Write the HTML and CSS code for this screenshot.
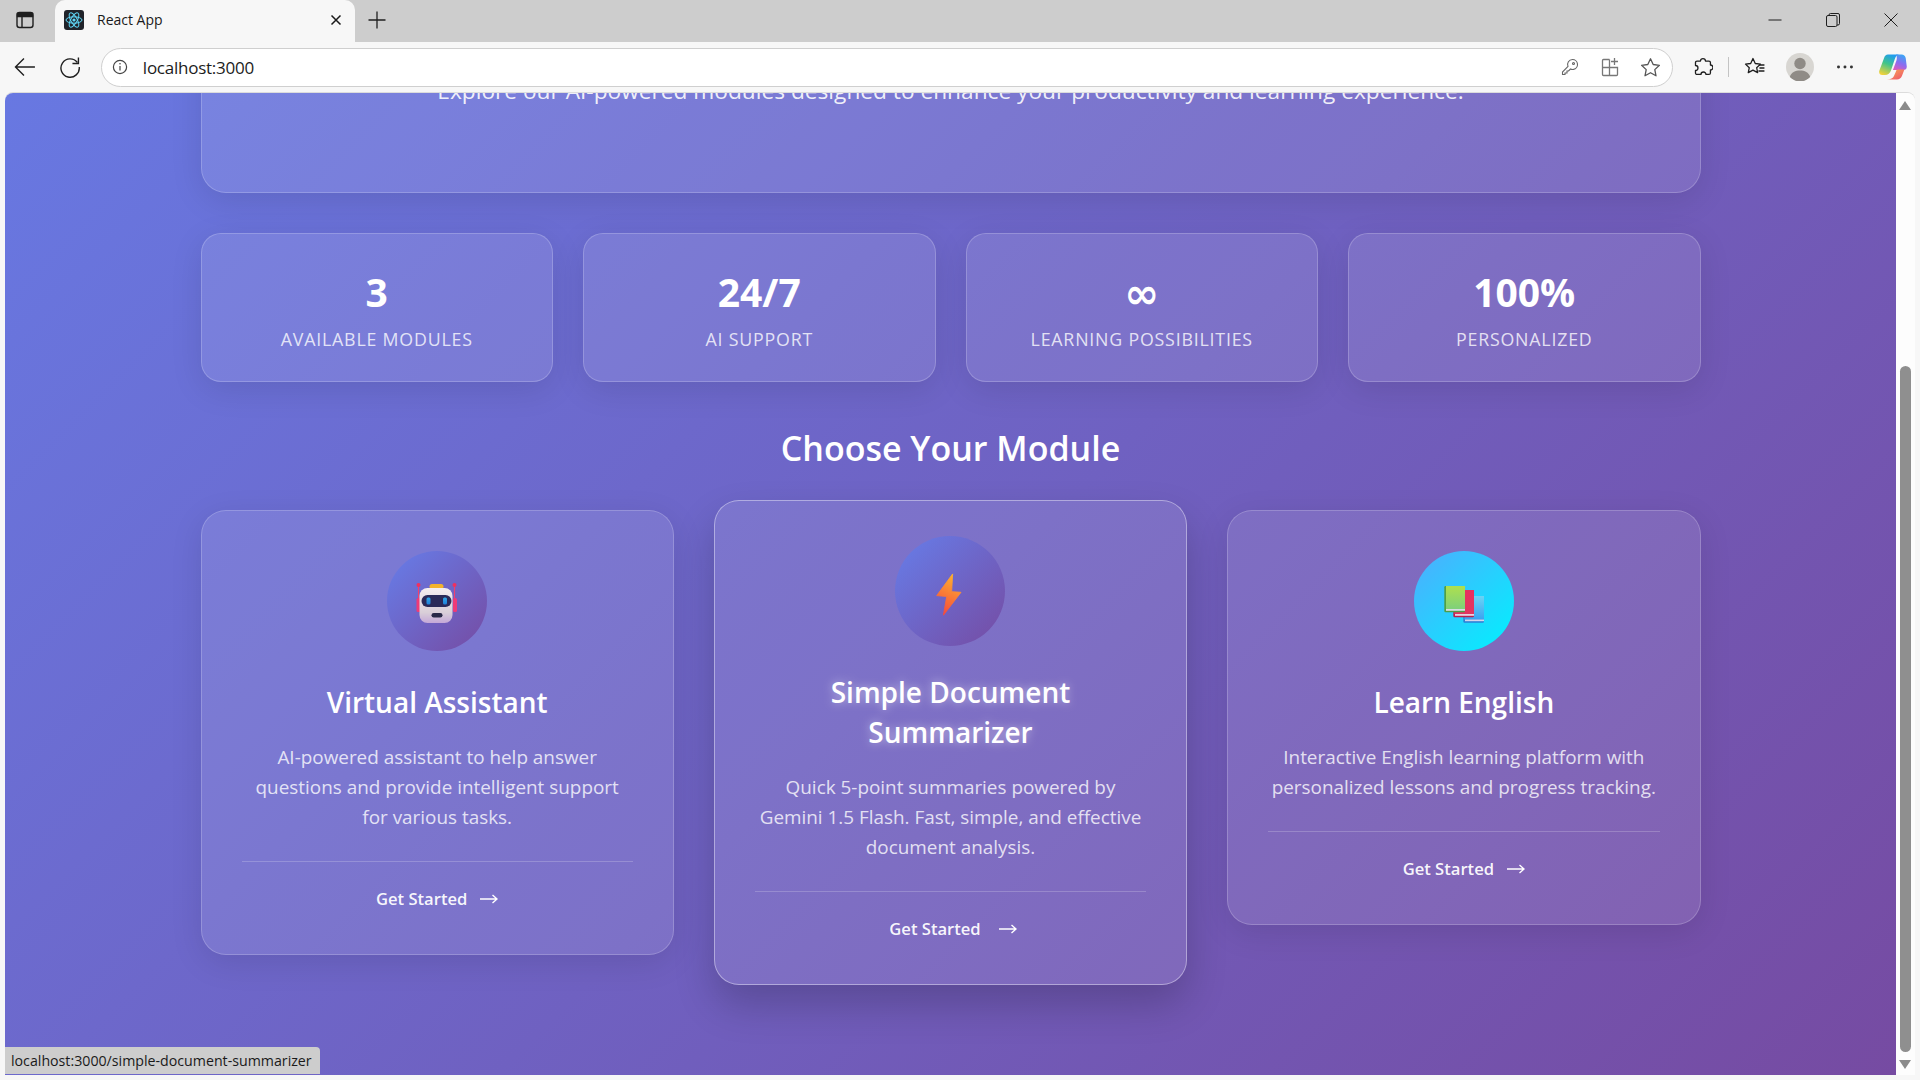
FILE: index.html
```html
<!DOCTYPE html>
<html lang="en">
<head>
<meta charset="utf-8">
<title>React App</title>
<link rel="stylesheet" href="styles.css">
</head>
<body>
<div class="window">
  <header class="tabstrip">
    <button class="chrome-btn sidebar-btn" aria-label="Tabs">
      <svg width="20" height="20" viewBox="0 0 20 20" fill="none" stroke="#1f1f1f" stroke-width="1.4"><rect x="2" y="2.5" width="16" height="15" rx="2.5"/><path d="M2.5 3.5h15v3h-15z" fill="#1f1f1f"/><path d="M7 6v11"/></svg>
    </button>
    <div class="tab">
      <svg class="favicon" width="20" height="20" viewBox="0 0 20 20"><rect width="20" height="20" rx="3" fill="#20232a"/><g fill="none" stroke="#61dafb" stroke-width="1"><ellipse cx="10" cy="10" rx="8" ry="3.2"/><ellipse cx="10" cy="10" rx="8" ry="3.2" transform="rotate(60 10 10)"/><ellipse cx="10" cy="10" rx="8" ry="3.2" transform="rotate(120 10 10)"/></g><circle cx="10" cy="10" r="1.6" fill="#61dafb"/></svg>
      <span class="tab-title">React App</span>
      <svg class="tab-close" width="12" height="12" viewBox="0 0 12 12" stroke="#1a1a1a" stroke-width="1.5"><path d="M1.5 1.5l9 9M10.5 1.5l-9 9"/></svg>
    </div>
    <svg class="new-tab" width="18" height="18" viewBox="0 0 18 18" stroke="#1f1f1f" stroke-width="1.3"><path d="M9 0.5v17M0.5 9h17"/></svg>
    <div class="window-controls">
      <svg width="14" height="14" viewBox="0 0 14 14" stroke="#1f1f1f" stroke-width="1"><path d="M0.5 7h13"/></svg>
      <svg width="14" height="14" viewBox="0 0 14 14" fill="none" stroke="#1f1f1f" stroke-width="1"><rect x="0.5" y="2.5" width="10.5" height="11" rx="1.5"/><path d="M3 2.5V2a1.5 1.5 0 0 1 1.5-1.5H12A1.5 1.5 0 0 1 13.5 2v8.5a1.5 1.5 0 0 1-1.5 1.5h-1"/></svg>
      <svg width="14" height="14" viewBox="0 0 14 14" stroke="#1f1f1f" stroke-width="1"><path d="M0.5 0.5l13 13M13.5 0.5l-13 13"/></svg>
    </div>
  </header>

  <nav class="toolbar">
    <svg class="tool-back" width="22" height="22" viewBox="0 0 22 22" fill="none" stroke="#1f1f1f" stroke-width="1.4"><path d="M21 11H1.5M10 2.5L1.5 11l8.5 8.5"/></svg>
    <svg class="tool-reload" width="22" height="22" viewBox="0 0 22 22" fill="none" stroke="#1f1f1f" stroke-width="1.4"><path d="M18.5 6.5A9.2 9.2 0 1 0 20.3 11"/><path d="M19.5 1.5v6h-6"/></svg>
    <div class="address">
      <svg width="16" height="16" viewBox="0 0 16 16" fill="none" stroke="#444" stroke-width="1.2"><circle cx="8" cy="8" r="6.6"/><path d="M8 7v4.5"/><circle cx="8" cy="4.8" r=".8" fill="#444" stroke="none"/></svg>
      <span class="url">localhost:3000</span>
      <div class="address-icons">
        <svg width="20" height="20" viewBox="0 0 20 20" fill="none" stroke="#666" stroke-width="1.1"><path d="M12.5 2.5a5 5 0 0 1 1 9.9 5 5 0 0 1-3-.4L8.5 14H7v2H5v1.5H2.5v-2.5L8 9.500a5 5 0 0 1 4.500-7z"/><circle cx="13.500" cy="6.500" r="1"/></svg>
        <svg width="20" height="20" viewBox="0 0 20 20" fill="none" stroke="#777" stroke-width="1.3"><path d="M9.500 2.500H3.500a1 1 0 0 0-1 1v14a1 1 0 0 0 1 1h13a1 1 0 0 0 1-1v-7H2.500M9.500 2.500v16M14.500 1v7M11 4.500h7"/></svg>
        <svg width="21" height="21" viewBox="0 0 21 21" fill="none" stroke="#555" stroke-width="1.3" stroke-linejoin="round"><path d="M10.500 1.800l2.700 5.700 6.200.8-4.600 4.300 1.200 6.200-5.500-3.100-5.500 3.100 1.200-6.200-4.600-4.300 6.200-.8z"/></svg>
      </div>
    </div>
    <svg class="tool-icon" width="20" height="20" viewBox="0 0 20 20" fill="none" stroke="#1f1f1f" stroke-width="1.3" stroke-linejoin="round"><path d="M7.500 4A2.500 2.500 0 0 1 12.500 4h3.500a1.500 1.500 0 0 1 1.500 1.500V8a2.500 2.500 0 0 1 0 5v3a1.500 1.500 0 0 1-1.500 1.500h-3a2.500 2.500 0 0 0-5 0H4A1.500 1.500 0 0 1 2.500 16v-2.500a2.500 2.500 0 0 0 0-5V5.500A1.500 1.500 0 0 1 4 4z"/></svg>
    <span class="tool-sep"></span>
    <svg class="tool-icon" width="21" height="20" viewBox="0 0 21 20" fill="none" stroke="#1f1f1f" stroke-width="1.3" stroke-linejoin="round"><path d="M9 1.500l2.300 5 5.200.6-3.800 3.600 1 5-4.700-2.600-4.700 2.600 1-5L1.500 7.100l5.200-.6z"/><path d="M15 8h5.500M15.500 11h5M14.500 14h6"/></svg>
    <span class="avatar"><svg width="28" height="28" viewBox="0 0 28 28"><circle cx="14" cy="14" r="14" fill="#d8d6d2"/><circle cx="14" cy="10.500" r="5.700" fill="#8f8b86"/><path d="M3.800 24c1.500-5 5.500-6.500 10.200-6.500S22.700 19 24.200 24a14 14 0 0 1-20.400 0z" fill="#8f8b86"/></svg></span>
    <svg class="tool-dots" width="18" height="4" viewBox="0 0 18 4" fill="#333"><circle cx="2.500" cy="2" r="1.500"/><circle cx="9" cy="2" r="1.500"/><circle cx="15.500" cy="2" r="1.500"/></svg>
    <svg class="copilot" width="28" height="26" viewBox="0 0 28 26">
      <defs>
        <linearGradient id="cpA" x1="0.600" y1="0" x2="0.200" y2="1"><stop offset="0" stop-color="#1f9cf0"/><stop offset=".45" stop-color="#3fc48a"/><stop offset="1" stop-color="#f5d23a"/></linearGradient>
        <linearGradient id="cpB" x1="0.700" y1="0" x2="0.300" y2="1"><stop offset="0" stop-color="#38a8f5"/><stop offset=".55" stop-color="#8a6cf0"/><stop offset="1" stop-color="#d85cc0"/></linearGradient>
        <linearGradient id="cpC" x1="0" y1="0" x2="1" y2="1"><stop offset="0" stop-color="#f8b050"/><stop offset="1" stop-color="#ee4f6e"/></linearGradient>
      </defs>
      <path d="M9 0.500h11c-2.500.5-3.500 2.500-4.300 5l-3.700 11c-.8 2.500-3 4.500-6 4.500H3.200C1 21-.4 19 .3 16.800L5 4.200C5.800 1.800 7 .5 9 .5z" fill="url(#cpA)"/>
      <path d="M17 .5h5.500c2.500 0 3.700 1.300 4.300 3.500l1 8c.3 2.500-1 4-3.500 4H14l3.500-9.500c.7-2 .5-4.500-.5-6z" fill="url(#cpB)"/>
      <path d="M8 25.500h10c2.500 0 4-1.300 5-3.500l2.500-6.500H19c-1 0-1.800.8-2 2l-2 4.500c-.8 2-3.500 3.500-7 3.500z" fill="url(#cpC)"/>
    </svg>
  </nav>

  <div class="viewport">
    <main class="scroller">
      <div class="page">
        <section class="hero glass">
          <p class="hero-text">Explore our AI-powered modules designed to enhance your productivity and learning experience.</p>
        </section>

        <section class="stats">
          <div class="stat glass"><div class="stat-value">3</div><div class="stat-label">Available Modules</div></div>
          <div class="stat glass"><div class="stat-value">24/7</div><div class="stat-label">AI Support</div></div>
          <div class="stat glass"><div class="stat-value stat-value-symbol">∞</div><div class="stat-label">Learning Possibilities</div></div>
          <div class="stat glass"><div class="stat-value">100%</div><div class="stat-label">Personalized</div></div>
        </section>

        <h2 class="section-title">Choose Your Module</h2>

        <section class="modules">
          <a class="module glass" href="#">
            <div class="module-icon">
              <svg width="48" height="48" viewBox="0 0 48 48">
                <defs>
                  <linearGradient id="rbHead" x1="0" y1="0" x2="0" y2="1"><stop offset="0" stop-color="#f4eef0"/><stop offset=".7" stop-color="#d9cfd8"/><stop offset="1" stop-color="#c4a8d8"/></linearGradient>
                  <linearGradient id="rbEye" x1="0" y1="0" x2="0" y2="1"><stop offset="0" stop-color="#2fa8e8"/><stop offset="1" stop-color="#1f7fd8"/></linearGradient>
                </defs>
                <path d="M5.500 8v18M41.500 8v18" stroke="#f0406e" stroke-width="1.100"/>
                <circle cx="5.500" cy="8" r="2" fill="#f0305f"/><circle cx="41.500" cy="8" r="2" fill="#f0305f"/>
                <rect x="3.500" y="21" width="4" height="14" rx="1.500" fill="#ee3a78"/><rect x="40" y="21" width="4" height="14" rx="1.500" fill="#ee3a78"/>
                <rect x="16.500" y="7" width="14" height="5" rx="2.500" fill="#f3b32c"/>
                <rect x="6.500" y="11" width="33" height="35" rx="8" fill="url(#rbHead)"/>
                <rect x="8.500" y="18" width="30" height="12" rx="6" fill="#2a2a58"/>
                <rect x="13.500" y="20.500" width="4" height="7" rx="1.500" fill="url(#rbEye)"/><rect x="30" y="20.500" width="4" height="7" rx="1.500" fill="url(#rbEye)"/>
                <rect x="18.500" y="36" width="11" height="4.500" rx="2.200" fill="#2a2a48"/>
              </svg>
            </div>
            <h3 class="module-title">Virtual Assistant</h3>
            <p class="module-desc">AI-powered assistant to help answer questions and provide intelligent support for various tasks.</p>
            <div class="module-footer"><span>Get Started</span><svg class="arrow" width="18" height="10" viewBox="0 0 18 10" fill="none" stroke="#fff" stroke-width="1.400"><path d="M0 5h17M12.500 1L17 5l-4.500 4"/></svg></div>
          </a>

          <a class="module glass module-hover" href="#">
            <div class="module-icon">
              <svg width="48" height="48" viewBox="0 0 48 48">
                <defs><linearGradient id="bolt" x1="0.600" y1="0" x2="0.300" y2="1"><stop offset="0" stop-color="#fdb02e"/><stop offset="1" stop-color="#f5483e"/></linearGradient></defs>
                <path d="M26.400 8.500L11.900 28.200 21 29 18 46 34 25.200 25.500 24.600z" fill="url(#bolt)" stroke="url(#bolt)" stroke-width=".8" stroke-linejoin="round"/>
              </svg>
            </div>
            <h3 class="module-title">Simple Document Summarizer</h3>
            <p class="module-desc">Quick 5-point summaries powered by Gemini 1.5 Flash. Fast, simple, and effective document analysis.</p>
            <div class="module-footer"><span>Get Started</span><svg class="arrow" width="18" height="10" viewBox="0 0 18 10" fill="none" stroke="#fff" stroke-width="1.400"><path d="M0 5h17M12.500 1L17 5l-4.500 4"/></svg></div>
          </a>

          <a class="module glass" href="#">
            <div class="module-icon module-icon-cyan">
              <svg width="48" height="48" viewBox="0 0 48 48">
                <defs>
                  <linearGradient id="bkG" x1="0" y1="0" x2="0" y2="1"><stop offset="0" stop-color="#aee04e"/><stop offset="1" stop-color="#7fd07a"/></linearGradient>
                  <linearGradient id="bkR" x1="0" y1="0" x2="0" y2="1"><stop offset="0" stop-color="#e8305f"/><stop offset="1" stop-color="#e0355f"/></linearGradient>
                  <linearGradient id="bkB" x1="0" y1="0" x2="0" y2="1"><stop offset="0" stop-color="#6bd4f5"/><stop offset="1" stop-color="#3aa3f0"/></linearGradient>
                </defs>
                <rect x="23.300" y="19" width="20.700" height="26.700" rx="1.200" fill="#2b7fd6"/><rect x="24.500" y="19" width="19.500" height="23.500" fill="url(#bkB)"/><rect x="25" y="42.500" width="19" height="1.700" fill="#d6d4ea"/>
                <rect x="13.300" y="13" width="20.700" height="27.300" rx="1.200" fill="#b81f4e"/><rect x="14.500" y="13" width="19.500" height="24" fill="url(#bkR)"/><rect x="15" y="37" width="19" height="1.800" fill="#e8d0e0"/>
                <rect x="4.300" y="9" width="20.700" height="26.300" rx="1.200" fill="#4f9e48"/><rect x="6" y="9" width="19" height="23" fill="url(#bkG)"/><rect x="6" y="32" width="19" height="1.800" fill="#d9dce4"/>
              </svg>
            </div>
            <h3 class="module-title">Learn English</h3>
            <p class="module-desc">Interactive English learning platform with personalized lessons and progress tracking.</p>
            <div class="module-footer"><span>Get Started</span><svg class="arrow" width="18" height="10" viewBox="0 0 18 10" fill="none" stroke="#fff" stroke-width="1.400"><path d="M0 5h17M12.500 1L17 5l-4.500 4"/></svg></div>
          </a>
        </section>
      </div>
    </main>
    <aside class="scrollbar">
      <span class="sb-up"></span>
      <span class="sb-thumb"></span>
      <span class="sb-down"></span>
    </aside>
    <div class="status-bubble">localhost:3000/simple-document-summarizer</div>
  </div>
</div>
</body>
</html>
```
FILE: styles.css
```css
* { box-sizing: border-box; }
html, body { margin: 0; height: 100%; overflow: hidden; }
body { font-family: "Open Sans", "Noto Sans", sans-serif; color: #1a1a1a; background: #f7f7f7; }

.window { width: 1920px; height: 1080px; display: flex; flex-direction: column; }

/* browser tab strip */
.tabstrip { height: 42px; flex: none; background: #cdcdcd; display: flex; align-items: center; }
.chrome-btn { border: 0; background: none; padding: 0; width: 20px; height: 20px; margin: -2px 20px 0 15px; }
.tab { width: 300px; height: 42px; background: #f7f7f7; border-radius: 10px 10px 0 0; display: flex; align-items: center; padding: 0 13px 2px 9px; }
.favicon { margin-right: 13px; }
.tab-title { font-size: 14px; flex: 1; margin-top: -1px; }
.new-tab { margin: -2px 0 0 13px; }
.window-controls { margin-left: auto; display: flex; gap: 44px; padding: 0 22px 2px 0; align-items: center; }

/* browser toolbar */
.toolbar { height: 51px; flex: none; background: #f7f7f7; display: flex; align-items: center; padding: 0 13px 1px 14px; }
.tool-reload { margin-left: 23px; }
.address { width: 1578px; height: 39px; margin-left: 20px; background: #fff; border: 1.5px solid #cfcfcf; border-radius: 20px; display: flex; align-items: center; padding: 0 11px 0 10px; }
.url { font-size: 17px; margin-left: 15px; flex: 1; color: #1c1c1c; letter-spacing: -.25px; }
.address-icons { display: flex; align-items: center; gap: 20px; }
.address + .tool-icon { margin-left: 20px; }
.tool-sep { width: 1px; height: 20px; background: #c4c4c4; margin: 0 15px; }
.avatar { display: flex; margin-left: 21px; }
.tool-dots { margin-left: 22px; }
.copilot { margin-left: 25px; }

/* page viewport */
.viewport { flex: 1; min-height: 0; margin: 0 5px 5px; display: flex; position: relative; overflow: hidden; border-radius: 8px 8px 0 0; box-shadow: 0 -1px 0 #dcdcdc; }
.scroller { flex: 1; min-width: 0; overflow: hidden; }
.page { height: 1362px; margin-top: -380px; padding-top: 40px; background: linear-gradient(135deg, #667eea 0%, #764ba2 100%); }

.glass { background: rgba(255, 255, 255, .1); border: 1px solid rgba(255, 255, 255, .2); box-shadow: 0 8px 32px rgba(0, 0, 0, .1); }

.hero { width: 1500px; height: 440px; margin: 0 auto 40px; border-radius: 25px; display: flex; flex-direction: column; justify-content: flex-end; align-items: center; padding-bottom: 86px; }
.hero-text { margin: 0; font-size: 22.7px; line-height: 30px; color: rgba(255, 255, 255, .9); white-space: nowrap; }

.stats { width: 1500px; margin: 0 auto 41px; display: grid; grid-template-columns: repeat(4, 1fr); gap: 30px; }
.stat { height: 149px; border-radius: 20px; display: flex; flex-direction: column; align-items: center; padding-top: 33px; color: #fff; }
.stat-value { font-size: 39px; font-weight: 700; line-height: 50px; }
.stat-value-symbol { font-family: "DejaVu Sans", sans-serif; font-size: 42px; margin: 2px 0 -2px; }
.stat-label { font-size: 17.8px; line-height: 24px; margin-top: 10px; text-transform: uppercase; letter-spacing: .8px; color: rgba(255, 255, 255, .8); }

.section-title { margin: 0 0 37px; height: 50px; line-height: 50px; text-align: center; font-size: 34px; font-weight: 600; color: #fff; }

.modules { width: 1500px; margin: 0 auto; display: grid; grid-template-columns: repeat(3, 1fr); gap: 40px; align-items: start; }
.module { display: block; padding: 40px; border-radius: 25px; text-align: center; color: #fff; text-decoration: none; }
.module-icon { width: 100px; height: 100px; margin: 0 auto 31px; border-radius: 50%; display: flex; align-items: center; justify-content: center; background: linear-gradient(135deg, #667eea, #764ba2); }
.module-icon-cyan { background: linear-gradient(135deg, #4facfe, #00f2fe); }
.module-title { margin: 0 0 20px; font-size: 28px; line-height: 40px; font-weight: 600; color: #fff; }
.module-desc { margin: 0; font-size: 18.9px; line-height: 30px; color: rgba(255, 255, 255, .8); }
.module-footer { margin-top: 29px; border-top: 1px solid rgba(255, 255, 255, .2); padding-top: 22px; height: 53px; display: flex; justify-content: center; align-items: center; gap: 13px; font-size: 16.6px; font-weight: 600; color: rgba(255, 255, 255, .95); line-height: 26px; }

/* hovered card */
.module-hover { transform: translateY(-10px); border-color: rgba(255, 255, 255, .4); box-shadow: 0 20px 40px rgba(0, 0, 0, .2); }
.module-hover .module-icon { transform: scale(1.1); }
.module-hover .module-title { text-shadow: 0 0 10px rgba(255, 255, 255, .5); }
.module-hover .arrow { transform: translateX(5px); }

/* custom scrollbar */
.scrollbar { width: 19px; flex: none; background: #fdfdfd; position: relative; display: flex; flex-direction: column; align-items: center; }
.sb-up { width: 0; height: 0; margin: 8px 0 0 -1px; border-left: 6.5px solid transparent; border-right: 6.5px solid transparent; border-bottom: 9px solid #8b8b8b; }
.sb-thumb { width: 11px; height: 686px; margin-top: 256px; border-radius: 6px; background: #8f8f8f; }
.sb-down { width: 0; height: 0; margin: 8px 0 0 -1px; border-left: 6.5px solid transparent; border-right: 6.5px solid transparent; border-top: 9px solid #8b8b8b; }

.status-bubble { position: absolute; left: 0; bottom: 1px; width: 315px; height: 27px; padding-left: 6px; line-height: 27px; font-size: 14.2px; background: #cdcdcd; color: #1a1a1a; border-radius: 0 4px 0 0; white-space: nowrap; }
```
